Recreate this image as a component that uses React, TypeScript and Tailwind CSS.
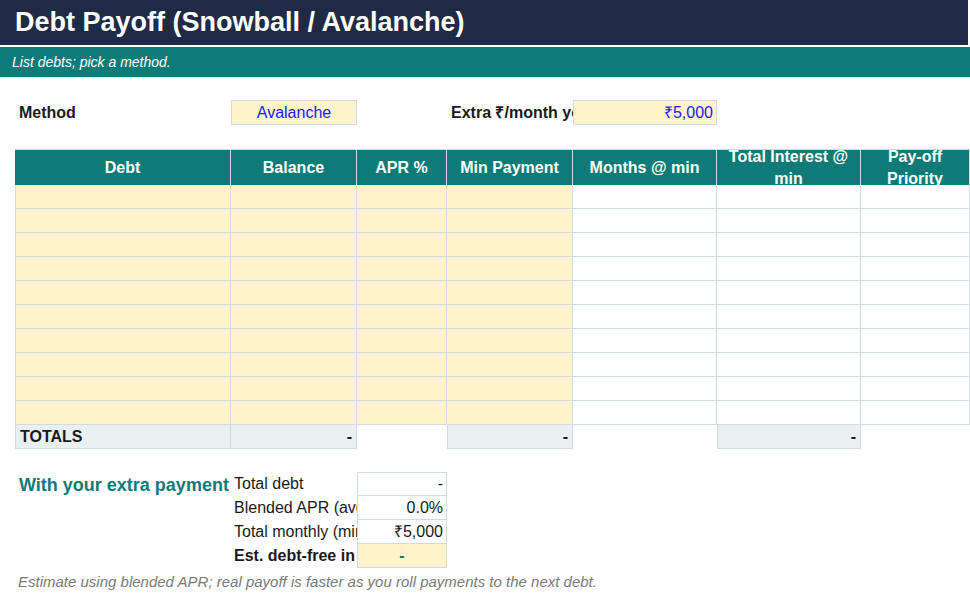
import React from "react";

const W = ["w-[216px]", "w-[126px]", "w-[90px]", "w-[126px]", "w-[144px]", "w-[144px]", "w-[109px]"];
const Y = "bg-[#fff3cc]";
const B = "border-[#d3dcdc]";

function DataRow() {
  return (
    <div className="flex h-[24px]">
      {W.map((w, i) => (
        <div key={i} className={`${w} shrink-0 border-r border-b ${B} ${i === 0 ? "border-l" : ""} ${i < 4 ? Y : "bg-white"}`} />
      ))}
    </div>
  );
}

export default function App() {
  const heads = ["Debt", "Balance", "APR %", "Min Payment", "Months @ min", "Total Interest @ min", "Pay-off Priority"];
  return (
    <div className="w-[970px] h-[610px] bg-white overflow-hidden text-[16px] text-[#1a1a1a]" style={{ fontFamily: '"Liberation Sans", Arial, sans-serif' }}>
      <div className="h-[45px] bg-[#1f2a44] text-white font-bold text-[27px] pl-[15px] flex items-center border-r-2 border-white">Debt Payoff (Snowball / Avalanche)</div>
      <div className="h-[2px] bg-white" />
      <div className="h-[30px] bg-[#0f7b78] text-white italic text-[14px] pl-[12px] flex items-center">List debts; pick a method.</div>
      <div className="h-[23px]" />
      <div className="flex h-[25px] pl-[15px] items-center">
        <div className="w-[216px] font-bold pl-[4px]">Method</div>
        <div className={`w-[126px] h-full ${Y} border ${B} text-[#1a1aff] flex items-center justify-center`}>Avalanche</div>
        <div className="w-[90px]" />
        <div className="w-[126px] font-bold pl-[4px] whitespace-nowrap overflow-hidden">Extra ₹/month you</div>
        <div className={`w-[144px] h-full ${Y} border ${B} text-[#1a1aff] flex items-center justify-end pr-[3px]`}>₹5,000</div>
      </div>
      <div className="h-[24px]" />
      <div className="pl-[15px]">
        <div className={`flex h-[36px] bg-[#0f7b78] text-white font-bold border-t ${B}`}>
          {heads.map((h, i) => (
            <div key={i} className={`${W[i]} shrink-0 border-r border-[#d3dcdc] flex justify-center text-center overflow-hidden ${i >= 5 ? "items-start leading-[22px] pt-[-2px]" : "items-center"}`}>
              <span className={i >= 5 ? "-mt-[4px] px-[2px]" : ""}>{h}</span>
            </div>
          ))}
        </div>
        {Array.from({ length: 10 }).map((_, i) => <DataRow key={i} />)}
        <div className="flex h-[24px]">
          <div className={`${W[0]} bg-[#e8f1f0] border-l border-r border-b ${B} font-bold pl-[4px] flex items-center`}>TOTALS</div>
          <div className={`${W[1]} bg-[#e8f1f0] border-r border-b ${B} flex items-center justify-end pr-[4px] font-bold`}>-</div>
          <div className={W[2]} />
          <div className={`${W[3]} bg-[#e8f1f0] border-l border-r border-b ${B} flex items-center justify-end pr-[4px] font-bold`}>-</div>
          <div className={W[4]} />
          <div className={`${W[5]} bg-[#e8f1f0] border-l border-r border-b ${B} flex items-center justify-end pr-[4px] font-bold`}>-</div>
        </div>
        <div className="h-[23px]" />
        <div className="flex">
          <div className="w-[216px] shrink-0 text-[#0f7b78] font-bold text-[18px] pl-[4px] whitespace-nowrap overflow-hidden h-[24px] leading-[26px]">With your extra payment</div>
          <div className="flex flex-col">
            {[
              ["Total debt", "-", false],
              ["Blended APR (avg)", "0.0%", false],
              ["Total monthly (min + extra)", "₹5,000", false],
              ["Est. debt-free in", "-", true],
            ].map(([l, v, last], i) => (
              <div key={i} className="flex h-[24px]">
                <div className={`w-[126px] shrink-0 pl-[3px] whitespace-nowrap overflow-hidden flex items-center ${last ? "font-bold" : ""}`}>{l as string}</div>
                <div className={`w-[90px] shrink-0 border-l border-r border-b ${i === 0 ? "border-t" : ""} ${B} flex items-center ${last ? `${Y} justify-center text-[#0f7b78] font-bold` : "bg-white justify-end pr-[3px]"}`}>{v as string}</div>
              </div>
            ))}
          </div>
        </div>
        <div className="italic text-[15px] text-[#7a7a7a] pl-[3px] mt-[3px]">Estimate using blended APR; real payoff is faster as you roll payments to the next debt.</div>
      </div>
    </div>
  );
}
